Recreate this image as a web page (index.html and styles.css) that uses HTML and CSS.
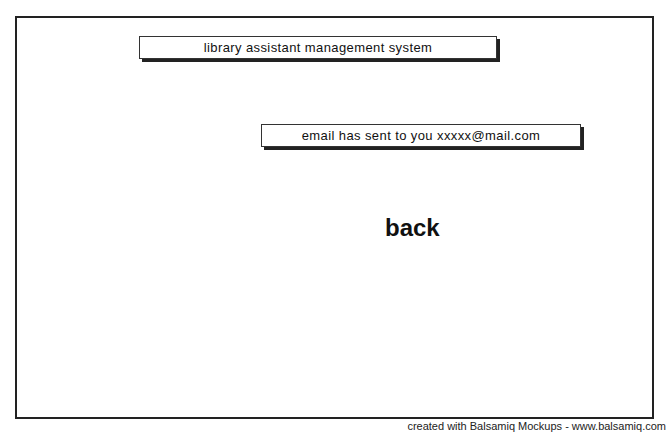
FILE: index.html
```html
<!DOCTYPE html>
<html lang="en">
<head>
    <meta charset="UTF-8">
    <title>Email sent</title>
    <link rel="stylesheet" href="styles.css">
</head>
<body>
    <div class="frame">
        <div class="label title">library assistant management system</div>
        <div class="label message">email has sent to you xxxxx@mail.com</div>
        <div class="back">back</div>
    </div>
    <div class="credit">created with Balsamiq Mockups - www.balsamiq.com</div>
</body>
</html>
```

FILE: styles.css
```css
*{
    margin: 0;
    padding: 0;
    box-sizing: border-box;
}
body{
    background-color: #fff;
    font-family: "Liberation Sans", Arial, sans-serif;
    color: #111;
    width: 670px;
    height: 436px;
    overflow: hidden;
}
.frame{
    margin: 16px 0 0 15px;
    width: 639px;
    height: 403px;
    border: 2px solid #222;
    padding-top: 18px;
    display: flex;
    flex-direction: column;
    align-items: flex-start;
}
.label{
    height: 23px;
    border: 1px solid #333;
    box-shadow: 3px 3px 0 #222;
    font-size: 13px;
    letter-spacing: 0.4px;
    line-height: 21px;
    text-align: center;
}
.title{
    margin-left: 122px;
    width: 358px;
}
.message{
    margin-top: 65px;
    margin-left: 244px;
    width: 320px;
}
.back{
    margin-top: 66px;
    margin-left: 368px;
    font-size: 24px;
    font-weight: bold;
    line-height: 30px;
}
.credit{
    margin-top: 1px;
    padding-right: 4px;
    text-align: right;
    font-size: 11px;
    color: #222;
}
```
